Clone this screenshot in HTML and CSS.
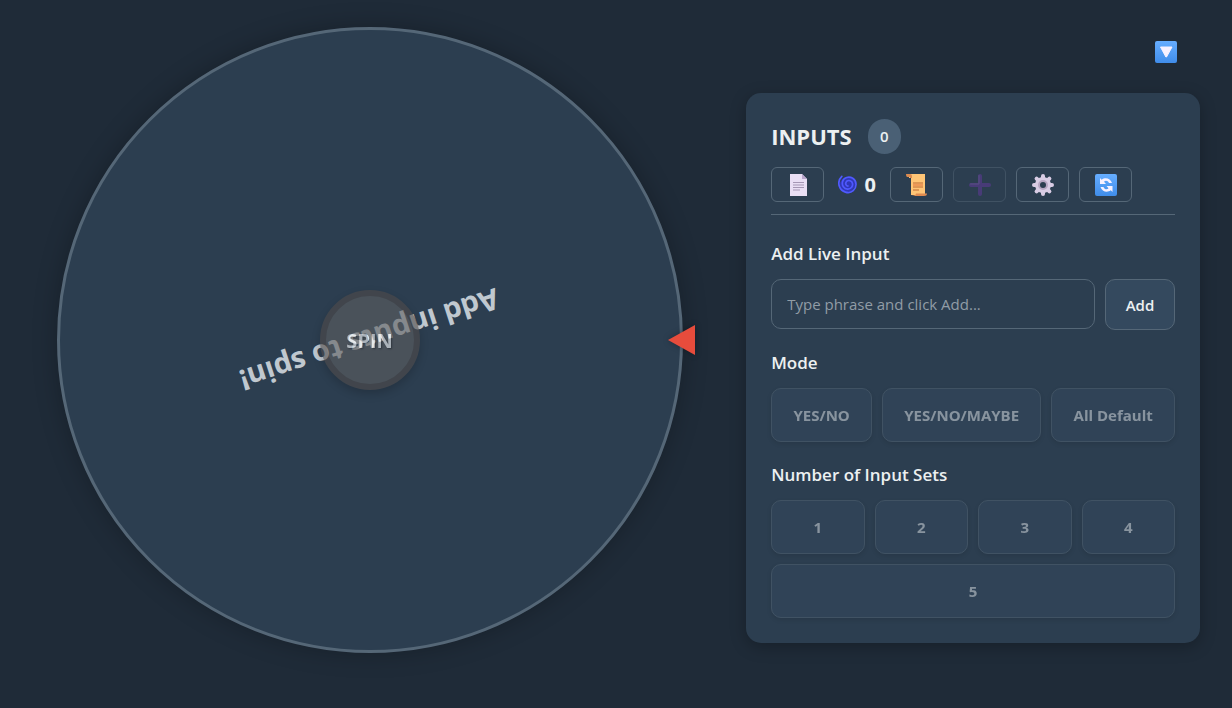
FILE: index.html
```html
<!DOCTYPE html>
<html lang="en">
<head>
<meta charset="utf-8">
<meta name="viewport" content="width=device-width, initial-scale=1">
<title>Spin Wheel</title>
<link rel="stylesheet" href="styles.css">
</head>
<body>
<div class="page">
  <main class="stage">
    <div class="wheel">
      <p class="wheel-text">Add inputs to spin!</p>
      <button class="spin" type="button" disabled>SPIN</button>
      <svg class="pointer" viewBox="0 0 27 30" aria-hidden="true"><path d="M0 15 27 0v30z" fill="#e74c3c"/></svg>
    </div>
  </main>
  <aside class="sidebar">
    <button class="toggle" type="button" aria-label="Collapse panel">
      <svg class="icon" viewBox="0 0 24 24"><defs><linearGradient id="blue" x1="0" y1="0" x2="0" y2="1"><stop offset="0" stop-color="#66adff"/><stop offset="1" stop-color="#408dea"/></linearGradient></defs><rect x="1" y="1" width="22" height="22" rx="2" fill="url(#blue)"/><path d="M6.500 7h11.500L12.500 17h-.6z" fill="#f8f1ff" stroke="#f8f1ff" stroke-linejoin="round"/></svg>
    </button>
    <section class="panel">
      <header class="panel-head">
        <div class="title-row"><h1 class="title">INPUTS</h1><span class="count">0</span></div>
        <div class="toolbar">
          <button class="tool" type="button" aria-label="Inputs list">
            <svg class="icon" viewBox="0 0 24 24"><path d="M4 1h12l5 5v17H4z" fill="#e9def4"/><path d="M16 1v5h5z" fill="#b9a5cc"/><path d="M7 9.500h11M7 12h11M7 14.500h11M7 17h7" stroke="#a596b4"/></svg>
          </button>
          <span class="spins"><svg class="swirl" viewBox="0 0 20 20" aria-hidden="true"><circle cx="10" cy="10" r="8" fill="#2f37b8"/><path d="M4 1.500C1 4.500.3 8.500 1.500 12c2 6 10 8.500 14.500 4.500 4-3.600 4-10-.5-13C11.500 1 6 2.500 4.800 7c-1 4 1.500 7.500 5.200 7.800 3.500.2 5.800-2.600 5.300-5.700C14.800 6 11 4.800 9 6.800c-1.800 2-.6 5 1.600 4.800" fill="none" stroke="#4f59ff" stroke-width="1.800" stroke-linecap="round"/></svg><span>0</span></span>
          <button class="tool" type="button" aria-label="History">
            <svg class="icon" viewBox="0 0 24 24"><path d="M4 1h16v21H6V5H4z" fill="#ffc576"/><path d="M1 1h4q2 0 2 2v2H5V4H2Q1 4 1 1z" fill="#dc8b50"/><path d="M6 23h13q3 0 3-2.500H11q0 2-5 2.500z" fill="#e08b50"/><path d="M8 10h10M8 14h10M8 17h6" stroke="#bd6833"/><path d="M8 12h10" stroke="#ee9857" stroke-width="2"/></svg>
          </button>
          <button class="tool" type="button" aria-label="Add input" disabled>
            <svg class="icon" viewBox="0 0 24 24"><path d="M12 3v18M3 12h18" stroke="#64399f" stroke-width="4" stroke-linecap="round"/><path d="M11 2.500V11H2.500" fill="none" stroke="#8462b5" stroke-linecap="round"/></svg>
          </button>
          <button class="tool" type="button" aria-label="Settings">
            <svg class="icon" viewBox="0 0 24 24"><g stroke="#d9cce4" stroke-width="4" stroke-linecap="round"><path d="M12 3v18M3 12h18M5.600 5.600l12.800 12.800M18.400 5.600 5.600 18.400"/></g><circle cx="12" cy="12" r="8" fill="#d9cce4"/><circle cx="12" cy="12" r="4" fill="#2c3e50" stroke="#b6a6c2" stroke-width="2"/></svg>
          </button>
          <button class="tool" type="button" aria-label="Reset">
            <svg class="icon" viewBox="0 0 24 24"><rect x="1" y="1" width="22" height="22" rx="2" fill="url(#blue)"/><g fill="#f8f1ff"><path d="M6 5l1.700 1.700C11 4 16.500 5 18 10h-3c-1-2.500-3.600-3-5-1.200L12 11H6z"/><path d="M18.500 19l-1.700-1.700C13.500 20 8 19 6.500 14h3c1 2.500 3.600 3 5 1.200L12.500 13h6z"/></g></svg>
          </button>
        </div>
      </header>
      <form class="group">
        <label class="label" for="phrase">Add Live Input</label>
        <div class="row"><input class="field" id="phrase" type="text" placeholder="Type phrase and click Add..."><button class="btn add" type="button">Add</button></div>
      </form>
      <section class="group">
        <h2 class="label">Mode</h2>
        <div class="row"><button class="btn option" type="button" disabled>YES/NO</button><button class="btn option" type="button" disabled>YES/NO/MAYBE</button><button class="btn option" type="button" disabled>All Default</button></div>
      </section>
      <section class="group">
        <h2 class="label">Number of Input Sets</h2>
        <div class="sets"><button class="btn option" type="button" disabled>1</button><button class="btn option" type="button" disabled>2</button><button class="btn option" type="button" disabled>3</button><button class="btn option" type="button" disabled>4</button><button class="btn option wide" type="button" disabled>5</button></div>
      </section>
    </section>
  </aside>
</div>
</body>
</html>
```
FILE: styles.css
```css
* { box-sizing: border-box; }
body {
  margin: 0;
  background: #1f2b38;
  color: #ecf0f1;
  font-family: "Segoe UI", "Open Sans", "Noto Sans", sans-serif;
  font-size: 16px;
}
button, input { font: inherit; color: inherit; }
h1, h2, p { margin: 0; }
.page { display: grid; grid-template-columns: minmax(0, 3fr) minmax(0, 2fr); min-height: 100vh; }
.stage { display: flex; justify-content: center; align-items: flex-start; padding-top: 27px; }
.wheel {
  position: relative;
  display: grid;
  place-items: center;
  width: min(85%, calc(100vh - 82px));
  aspect-ratio: 1;
  border: 3px solid #556777;
  border-radius: 50%;
  background: #2c3e50;
  box-shadow: 0 0 24px rgba(0, 0, 0, 0.25);
}
.wheel-text, .spin { grid-area: 1 / 1; }
.wheel-text {
  font-size: 29px;
  font-weight: 700;
  line-height: 36px;
  color: #c0c8cf;
  white-space: nowrap;
  transform: rotate(162deg);
}
.spin {
  z-index: 1;
  width: 100px;
  height: 100px;
  padding: 0;
  border: 6px solid #4f4b4a;
  border-radius: 50%;
  background: #5f6062;
  color: #fff;
  font-size: 20px;
  font-weight: 700;
  text-shadow: 1px 1px 2px rgba(0, 0, 0, 0.5);
  box-shadow: 0 4px 10px rgba(0, 0, 0, 0.3);
  opacity: 0.6;
}
.pointer { position: absolute; right: -15px; top: calc(50% - 15px); width: 27px; height: 30px; filter: drop-shadow(0 0 3px rgba(0, 0, 0, 0.3)); }
.sidebar { display: flex; flex-direction: column; padding: 40px 32px 40px 7px; }
.icon { display: block; width: 24px; height: 24px; }
.toggle { align-self: flex-end; margin: 0 22px 29px 0; padding: 0; border: 0; background: none; }
.panel {
  display: flex;
  flex-direction: column;
  gap: 20px;
  padding: 25px;
  border-radius: 15px;
  background: #2c3e50;
  box-shadow: 0 4px 16px rgba(0, 0, 0, 0.25);
}
.panel-head { padding-bottom: 12px; margin-bottom: 6px; border-bottom: 1px solid #556777; }
.title-row { display: flex; align-items: center; gap: 16px; margin-bottom: 13px; }
.title { font-size: 22px; line-height: 36px; font-weight: 700; }
.count { display: grid; place-items: center; width: 33px; height: 35px; border-radius: 18px; background: #4a6075; font-size: 15px; font-weight: 600; }
.toolbar { display: flex; align-items: center; gap: 10px; }
.tool { display: grid; place-items: center; width: 53px; height: 35px; padding: 0; border: 1px solid #556777; border-radius: 6px; background: none; }
.tool:disabled { opacity: 0.5; }
.spins { display: flex; align-items: center; justify-content: center; gap: 7px; width: 46px; font-size: 20px; line-height: 26px; font-weight: 700; }
.swirl { width: 19px; height: 19px; }
.group { display: flex; flex-direction: column; gap: 12px; }
.label { font-size: 17px; line-height: 26px; font-weight: 600; }
.row { display: flex; gap: 10px; }
.field { flex: 1; min-width: 0; height: 50px; padding: 0 15px; border: 1px solid #556777; border-radius: 10px; background: #2c3e50; font-size: 15px; }
.field::placeholder { color: #919ca6; opacity: 1; }
.btn { padding: 0 19px; border: 1px solid #556777; border-radius: 10px; background: #34495e; font-size: 15px; font-weight: 600; white-space: nowrap; }
.add { width: 70px; height: 51px; }
.option { flex: 1 1 auto; height: 54px; font-weight: 700; color: #e4e9ed; opacity: 0.5; box-shadow: 0 2px 5px rgba(0, 0, 0, 0.2); }
.sets { display: grid; grid-template-columns: repeat(4, 1fr); gap: 10px; }
.wide { grid-column: 1 / -1; }
```
